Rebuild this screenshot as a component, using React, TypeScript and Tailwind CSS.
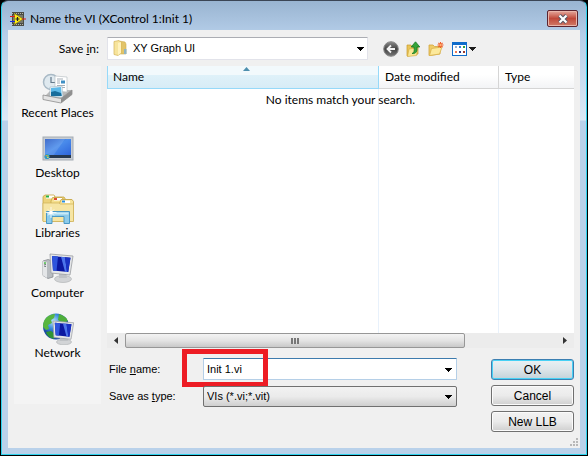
import { useState } from "react"
import type { ReactNode } from "react"

const ArrowDown = () => (
  <svg width="7" height="4" viewBox="0 0 7 4" shapeRendering="crispEdges">
    <path d="M0 0h7v1H6v1H5v1H4v1H3V3H2V2H1V1H0z" fill="#000" />
  </svg>
)

const AppIcon = () => (
  <svg width="16" height="16" viewBox="0 0 16 16">
    <path d="M2 1h12v14H2z" fill="#4b4c45" />
    <path d="M2 2.500h12M2 13.500h12" stroke="#b4b4a8" strokeDasharray="1 1" />
    <path d="M3 4h10v8H3z" fill="#77786c" />
    <path d="M4.500 2.500v11L13 8z" fill="#ffed1c" stroke="#8a7800" strokeWidth=".6" />
    <path d="M0 5.500h5M12 8h4" stroke="#e01b1b" />
    <path d="M0 10.500h5" stroke="#1a2ad8" />
    <path d="M7.500 6v4M5.500 8h4" stroke="#222" strokeWidth="1.200" />
  </svg>
)

const FolderIcon = () => (
  <svg width="15" height="16" viewBox="0 0 15 16">
    <path d="M6 1l6 1 1 2v10H6z" fill="#e2c469" stroke="#cfae50" strokeWidth=".6" />
    <path d="M11 9h2.500v5H11z" fill="#8fb4c4" />
    <path d="M1 1.500l5-1 2 2V13l-3 2.500-4-1z" fill="#f7e49b" stroke="#d3b356" strokeWidth=".7" />
    <path d="M5 3l3-1v11l-3 2z" fill="#fff2bd" />
  </svg>
)

const BackIcon = () => (
  <svg width="16" height="16" viewBox="0 0 16 16">
    <defs>
      <linearGradient id="back" x2="0" y2="1">
        <stop offset="0" stopColor="#8c8c8c" />
        <stop offset=".5" stopColor="#454545" />
        <stop offset="1" stopColor="#777" />
      </linearGradient>
    </defs>
    <circle cx="8" cy="8" r="7.300" fill="url(#back)" stroke="#8a8a8a" />
    <path d="M12 8H5M8 4.500L4.500 8 8 11.500" fill="none" stroke="#f4f4f4" strokeWidth="1.800" />
  </svg>
)

const UpIcon = () => (
  <svg width="15" height="16" viewBox="0 0 15 16">
    <path d="M1 4h4l1 2h6v7l-10 2H1z" fill="#e9c458" stroke="#c99c2b" strokeWidth=".7" />
    <path d="M3 8l9-1-1.500 7.500L1.500 15.500z" fill="#fbe793" stroke="#d1aa40" strokeWidth=".6" />
    <path d="M6 12.500c2.500-.5 2.500-3.500 2-6.500H5.200L9.500.8 13.800 6H11c.5 4.500-1 7-5 6.500z" fill="#35a43a" stroke="#177a22" strokeWidth=".8" />
  </svg>
)

const NewFolderIcon = () => (
  <svg width="17" height="16" viewBox="0 0 17 16">
    <path d="M1 4h4l1.500 1.500H12V13L2 14.500H1z" fill="#efcc67" stroke="#d2a43c" strokeWidth=".8" />
    <path d="M3.500 7.500L14 6l-2.500 7-10 1.500z" fill="#fce99b" stroke="#d9b24c" strokeWidth=".8" />
    <path d="M12.500 1v6M9.500 4h6M10.400 1.900l4.200 4.200M14.600 1.900l-4.200 4.200" stroke="#ee5a28" strokeWidth="1.100" />
    <circle cx="12.500" cy="4" r="1.200" fill="#ffb070" />
  </svg>
)

const ViewIcon = () => (
  <svg width="24" height="14" viewBox="0 0 24 14" shapeRendering="crispEdges">
    <path d="M0 0h15v14H0z" fill="#0f6ccb" />
    <path d="M1 3h13v10H1z" fill="#fff" />
    <path d="M3 4h2v2H3z" fill="#9fb0c8" />
    <path d="M7 4h2v2H7z" fill="#3a7fd4" />
    <path d="M11 4h2v2h-2z" fill="#2ea03c" />
    <path d="M3 9h2v2H3z" fill="#ee7a55" />
    <path d="M7 9h2v2H7z" fill="#25388e" />
    <path d="M11 9h2v2h-2z" fill="#a03a2c" />
    <path d="M17 5h7v1h-1v1h-1v1h-1v1h-1V8h-1V7h-1V6h-1z" fill="#1c1c1c" />
  </svg>
)

const RecentIcon = () => (
  <svg width="32" height="32" viewBox="0 0 32 32">
    <circle cx="9" cy="9" r="7.500" fill="#dfe9ef" stroke="#a9bac6" strokeWidth="1.500" />
    <path d="M9 4v5.500h4" fill="none" stroke="#64798a" strokeWidth="1.200" />
    <path d="M2 24l7-7h21l-5 8z" fill="#b9b9b9" />
    <path d="M13 3l12 1v15l-12-1z" fill="#fff" stroke="#b0b8bd" strokeWidth=".6" />
    <path d="M15 6h6M15 8h3M15 10h3M15 12.500h8M15 14.500h8" stroke="#8e9ba5" strokeWidth=".8" />
    <path d="M19 7.500h4v3h-4z" fill="#3e8fc4" />
    <path d="M8 14l12-1 1 11-13 1z" fill="#f4fafd" stroke="#9fb5c2" strokeWidth=".6" />
    <path d="M9 15l10-1 .8 8.500L9 23z" fill="#5db9e8" />
    <path d="M9 19l4-1 6 2 .8 3-10.800.5z" fill="#176d9c" />
    <path d="M1 22l18 3.500L30 17v4.500L19 30 1 26.500z" fill="#e4e4e4" stroke="#8d8d8d" strokeWidth=".8" />
    <path d="M19 25.500L30 17v4.500L19 30z" fill="#8f8f8f" />
  </svg>
)

const DesktopIcon = () => (
  <svg width="32" height="32" viewBox="0 0 32 32">
    <defs>
      <linearGradient id="desk" x2="1" y2="1">
        <stop offset="0" stopColor="#2759c4" />
        <stop offset=".45" stopColor="#4a8ceb" />
        <stop offset="1" stopColor="#2c62da" />
      </linearGradient>
    </defs>
    <rect x="1" y="4" width="30" height="23" fill="#c7ccd2" stroke="#a4abb3" />
    <rect x="3" y="6" width="26" height="17" fill="url(#desk)" />
    <path d="M3 6h20L11 23H3z" fill="#fff" opacity=".12" />
    <rect x="3" y="22" width="26" height="3" fill="#26384f" />
    <circle cx="5" cy="23.500" r="2.600" fill="#2b9ac4" />
    <path d="M3.700 22h1.300v1.300H3.700z" fill="#f08a3c" />
    <path d="M5.200 22h1.300v1.300H5.200z" fill="#8fd14c" />
    <path d="M5.200 23.700h1.300V25H5.200z" fill="#ffe14d" />
  </svg>
)

const LibrariesIcon = () => (
  <svg width="32" height="32" viewBox="0 0 32 32">
    <path d="M1 28V3.500L3 2h9l1 2h9l2 3v21z" fill="#ecd27a" stroke="#c5a445" strokeWidth=".8" />
    <path d="M4 2.500h8v3H4z" fill="#fff" />
    <path d="M4 2.500h3v2H4z" fill="#26b045" />
    <path d="M9 8l1.500-3.500H20l1.500 2H29v22H9z" fill="#f5df8e" stroke="#c5a445" strokeWidth=".8" />
    <path d="M12 5h8v2.500h-8z" fill="#fff" />
    <path d="M12 5h3v2h-3z" fill="#dc4b36" />
    <path d="M17 12l2-5.500h11l1.500 2V28H17z" fill="#f7e49a" stroke="#c5a445" strokeWidth=".8" />
    <path d="M20 7.500h8V10h-8z" fill="#fff" />
    <path d="M20 7.500h3v2h-3z" fill="#2b8fe0" />
    <path d="M1 10h16l1.500 1H31.500v17.500H1z" fill="#f6e5a4" stroke="#d0b157" strokeWidth=".7" />
    <path d="M4.500 30.500v-12h23v12h-5.500v-7H10v7z" fill="#8dcbea" stroke="#4998c6" />
    <path d="M5.500 19.500h21v2h-21z" fill="#c9ebf8" />
    <path d="M9 14v11M3.500 19.500h11M6 16.500l6 6M12 16.500l-6 6" stroke="#fff" strokeWidth=".8" />
    <circle cx="9" cy="19.500" r="1.700" fill="#fff" />
  </svg>
)

const Monitor = () => (
  <>
    <path d="M0 0l23 2-3 19-19-2z" fill="#e4e6e8" stroke="#9a9da1" strokeWidth=".8" />
    <path d="M2 2l18.500 1.700L18.200 18 3 16.500z" fill="#0c18a0" />
    <path d="M2 2l6 .5-1.500 14.400L3 16.500z" fill="#2f55dc" />
    <path d="M11 2.800l4 .4 2 14.700-2-.2z" fill="#4c74ea" />
    <path d="M15 3.200l5.500.5L18.200 18l-1.200-.1z" fill="#1a32c4" />
  </>
)

const ComputerIcon = () => (
  <svg width="32" height="32" viewBox="0 0 32 32">
    <path d="M1 8l5-1.500L11 8v16l-5 1.500-5-3z" fill="#b8bcc0" stroke="#7c8186" strokeWidth=".7" />
    <path d="M1 8l4 1.500V25l-4-2.500z" fill="#e4e6e8" />
    <path d="M2 11l2 .5M2 13l2 .5" stroke="#6a7076" />
    <circle cx="3" cy="10" r=".9" fill="#44bf3d" />
    <ellipse cx="21" cy="26" rx="8.500" ry="3.500" fill="#d2d4d6" stroke="#a9acaf" strokeWidth=".6" />
    <path d="M17 20h7l1 5h-8z" fill="#bfc2c5" />
    <g transform="translate(8 1)"><Monitor /></g>
  </svg>
)

const NetworkIcon = () => (
  <svg width="32" height="32" viewBox="0 0 32 32">
    <defs>
      <radialGradient id="globe" cx=".4" cy=".3">
        <stop offset="0" stopColor="#bfe6fb" />
        <stop offset=".55" stopColor="#3c8fdd" />
        <stop offset="1" stopColor="#1a4aa5" />
      </radialGradient>
    </defs>
    <circle cx="14" cy="13.500" r="13" fill="url(#globe)" />
    <path d="M4 5c3-3 6-4 9-4l-1 4-3 2 1 3-4 2 1 4-3 1-3-3c0-4 1-7 3-9z" fill="#58b63f" />
    <path d="M17 1c4 1 7 3 9 7l-5 2-5-3z" fill="#4eae3a" />
    <path d="M4 19l5-1 4 3-1 5c-4-1-7-3-8-7z" fill="#2f9434" />
    <ellipse cx="22" cy="29" rx="7.500" ry="2.800" fill="#d2d4d6" stroke="#a9acaf" strokeWidth=".6" />
    <path d="M18 24h7l1 4h-8z" fill="#bfc2c5" />
    <g transform="translate(11 8) scale(.9 .87)"><Monitor /></g>
  </svg>
)

const places: { name: string; icon: ReactNode }[] = [
  { name: "Recent Places", icon: <RecentIcon /> },
  { name: "Desktop", icon: <DesktopIcon /> },
  { name: "Libraries", icon: <LibrariesIcon /> },
  { name: "Computer", icon: <ComputerIcon /> },
  { name: "Network", icon: <NetworkIcon /> },
]

const tools = [
  { name: "Back", icon: <BackIcon /> },
  { name: "Up one level", icon: <UpIcon /> },
  { name: "New folder", icon: <NewFolderIcon /> },
  { name: "View menu", icon: <ViewIcon /> },
]

const grey = "bg-linear-to-b from-[#f2f2f2] via-[#ebebeb] via-50% to-[#cfcfcf]"
const button = "h-[21px] rounded-[3px] border border-[#707070] text-center shadow-[inset_0_0_0_1px_#fbfbfb]"

export default function App() {
  const [fileName, setFileName] = useState("Init 1.vi")

  return (
    <div className="min-h-screen flex bg-black font-['Lato','Open_Sans',sans-serif] text-xs text-black">
      <div className="flex-1 flex flex-col m-px mt-0 rounded-t-[7px] border border-[#2ed3ee] border-t-[#3b4555] bg-[linear-gradient(#99b4d1_0px,#b5cee9_34px,#dce9f6_119px,#b9d1ea_120px)] px-1.5 pb-1.5">

        {/* TITLE BAR */}
        <header className="h-[29px] flex items-center pt-1.5 pl-0.5 pr-0.5">
          <AppIcon />
          <h1 className="flex-1 ml-1 whitespace-nowrap">Name the VI (XControl 1:Init 1)</h1>
          <button
            aria-label="Close"
            className="w-[31px] h-[17px] flex items-center justify-center rounded-[2px] border border-[#5c2430] bg-linear-to-b from-[#e3a79d] via-[#c0483a] via-50% to-[#d07a68] shadow-[inset_0_0_0_1px_#e9b5aa]"
          >
            <svg width="12" height="10" viewBox="0 0 12 10">
              <path d="M2.500 1.500l7 7M9.500 1.500l-7 7" stroke="#535666" strokeWidth="4" />
              <path d="M2.500 1.500l7 7M9.500 1.500l-7 7" stroke="#fff" strokeWidth="2.200" />
            </svg>
          </button>
        </header>

        <div className="relative flex-1 flex flex-col bg-[#f0f0f0] px-1.5 pt-[7px] pb-4">

          {/* FOLDER ROW */}
          <div className="flex items-center h-[23px] mb-1.5">
            <label htmlFor="folder" className="w-[87px] pr-0.5 mr-1.5 text-right">
              Save <u>i</u>n:
            </label>
            <div className="relative flex-1 h-[23px]">
              <select
                id="folder"
                className="appearance-none w-full h-full pl-[25px] bg-white border border-[#e2e3ea] border-t-[#abadb3] rounded-[1px] font-['Liberation_Sans',sans-serif] text-[11px]"
              >
                <option>XY Graph UI</option>
              </select>
              <span className="absolute left-1.5 top-[3px] pointer-events-none"><FolderIcon /></span>
              <span className="absolute right-1 top-2.5 pointer-events-none"><ArrowDown /></span>
            </div>
            <div className="w-[206px] pl-[15px] flex items-center gap-[7px]">
              {tools.map(t => (
                <button key={t.name} aria-label={t.name}>{t.icon}</button>
              ))}
            </div>
          </div>

          <div className="flex-1 flex gap-1.5">

            {/* PLACES */}
            <nav className="w-[87px] mb-7 flex flex-col bg-[#f4f4f4] pt-[7px]">
              {places.map(p => (
                <button key={p.name} className="h-[60px] flex flex-col items-center whitespace-nowrap">
                  {p.icon}
                  <span className="leading-4">{p.name}</span>
                </button>
              ))}
            </nav>

            <main className="flex-1 min-w-0 flex flex-col">

              {/* FILE LIST */}
              <div className="relative flex-1 flex bg-white">
                <table className="w-full table-fixed border-separate border-spacing-0">
                  <thead>
                    <tr className="h-[23px] text-left">
                      <th className="relative font-normal pl-[5px] border border-t-0 border-[#96d9f9] bg-[linear-gradient(#f2f9fc_40%,#dff1f9_40%,#d7ecf6)]">
                        Name
                        <svg className="absolute left-1/2 top-px" width="7" height="4" viewBox="0 0 7 4">
                          <path d="M0 4l3.500-4L7 4z" fill="#4d8fae" />
                        </svg>
                      </th>
                      <th className="w-[120px] font-normal pl-1.5 border-r border-b border-[#d5d5d5] bg-[linear-gradient(#fff_40%,#f3f4f6)]">Date modified</th>
                      <th className="w-[75px] font-normal pl-1.5 border-b border-[#d5d5d5] bg-[linear-gradient(#fff_40%,#f3f4f6)]">Type</th>
                    </tr>
                  </thead>
                  <tbody>
                    <tr>
                      <td className="border-r border-[#e8f1fb]" />
                      <td className="border-r border-[#e8f1fb]" />
                      <td />
                    </tr>
                  </tbody>
                </table>
                <p className="absolute inset-x-0 top-[26px] leading-4 text-center">No items match your search.</p>
              </div>

              {/* SCROLLBAR */}
              <div className="h-[15px] flex items-center bg-[#ececec]">
                <svg className="ml-1.5" width="5" height="7" viewBox="0 0 5 7"><path d="M5 0v7L1 3.500z" fill="#333" /></svg>
                <div className="ml-[7px] w-[340px] h-[15px] flex items-center justify-center gap-px rounded-[2px] border border-[#979797] bg-linear-to-b from-[#f3f3f3] via-[#e4e4e4] via-50% to-[#c9c9c9]">
                  <i className="w-0.5 h-1.5 bg-[#777]" />
                  <i className="w-0.5 h-1.5 bg-[#777]" />
                  <i className="w-0.5 h-1.5 bg-[#777]" />
                </div>
                <svg className="ml-auto mr-1.5" width="5" height="7" viewBox="0 0 5 7"><path d="M0 0v7l4-3.500z" fill="#333" /></svg>
              </div>

              {/* FORM */}
              <div className="flex pt-2.5 font-['Liberation_Sans',sans-serif] text-[11px]">
                <div className="flex-1 flex flex-col gap-1.5">
                  <div className="flex items-center">
                    <label htmlFor="name" className="w-24 pl-0.5">File <u>n</u>ame:</label>
                    <div className="relative flex-1">
                      <input
                        id="name"
                        value={fileName}
                        onChange={e => setFileName(e.target.value)}
                        className="block w-full h-[22px] px-[3px] bg-white border border-[#b5cfe7] border-t-[#3d7bad] rounded-[1px] outline-none"
                      />
                      <button aria-label="Earlier names" className="absolute right-[5px] top-2.5"><ArrowDown /></button>
                      <div className="absolute -left-[21px] -top-[9px] w-[86px] h-[38px] border-5 border-[#ed1c24] pointer-events-none" />
                    </div>
                  </div>
                  <div className="flex items-center">
                    <label htmlFor="type" className="w-24 pl-0.5">Save as <u>t</u>ype:</label>
                    <div className="relative flex-1">
                      <select id="type" className={`appearance-none block w-full h-[21px] px-[3px] rounded-[2px] border border-[#707070] ${grey}`}>
                        <option>VIs (*.vi;*.vit)</option>
                      </select>
                      <span className="absolute right-[5px] top-[9px] pointer-events-none"><ArrowDown /></span>
                    </div>
                  </div>
                </div>
                <div className="w-[83px] ml-[34px] pt-px flex flex-col gap-[5px] text-xs">
                  <button className="h-[21px] rounded-[3px] border border-[#3c7fb1] bg-linear-to-b from-[#eaf1f4] via-[#dde5e9] via-50% to-[#c3d2d9] text-center shadow-[inset_0_0_0_1px_#48d1f5]">
                    OK
                  </button>
                  <button className={`${button} ${grey}`}>Cancel</button>
                  <button className={`${button} ${grey}`}>New LLB</button>
                </div>
              </div>
            </main>
          </div>

          {/* RESIZE GRIP */}
          <svg className="absolute right-0.5 bottom-0.5" width="8" height="8" viewBox="0 0 8 8" shapeRendering="crispEdges">
            <path d="M6 0h2v2H6zM3 3h2v2H3zM6 3h2v2H6zM0 6h2v2H0zM3 6h2v2H3zM6 6h2v2H6z" fill="#b8b8b8" />
          </svg>
        </div>
      </div>
    </div>
  )
}
